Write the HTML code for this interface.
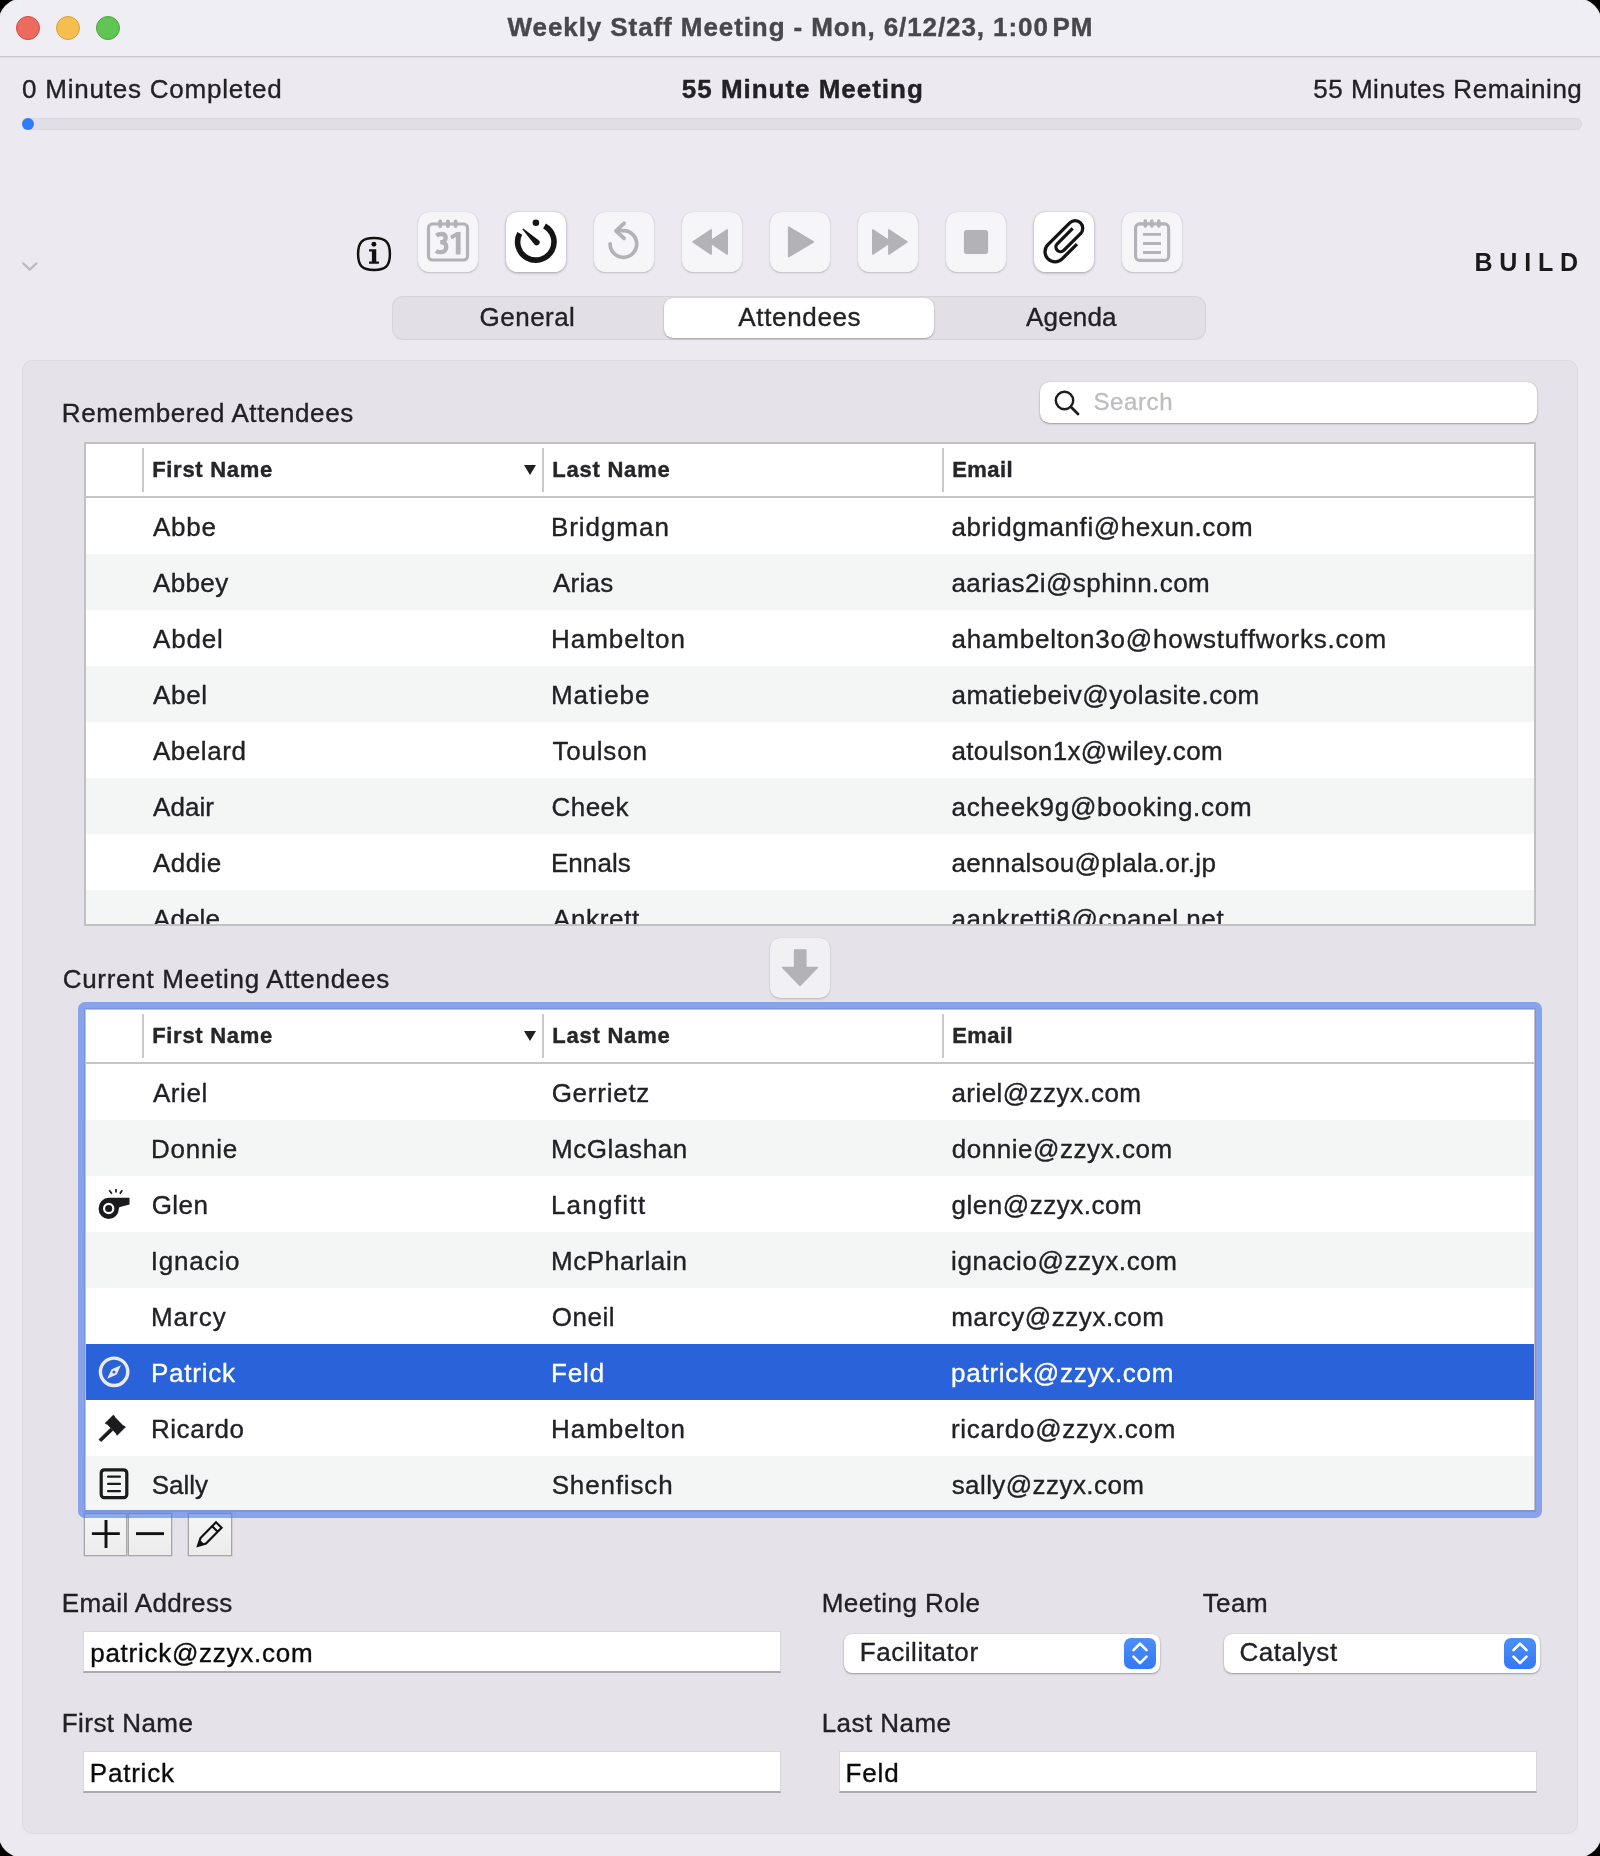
<!DOCTYPE html>
<html><head><meta charset="utf-8"><title>Weekly Staff Meeting</title>
<style>
*{box-sizing:border-box;margin:0;padding:0}
html,body{width:1600px;height:1856px;background:#000;overflow:hidden}
body{font-family:"Liberation Sans",sans-serif;color:#1d1d1f;position:relative}
.abs{position:absolute}
#win{will-change:transform;position:absolute;left:0;top:0;width:1600px;height:1856px;border-radius:22px;background:#ECEAF0;overflow:hidden;box-shadow:0 0 0 1.500px rgba(255,255,255,.9),inset 0 2px 0 rgba(255,255,255,.75)}
#tbar{position:absolute;left:0;top:0;width:1600px;height:57px;background:#F0EEF5;border-bottom:1px solid #CBC9CF}
#tbar:after{content:"";position:absolute;left:0;top:57px;width:1600px;height:1px;background:#DEDCE2}
.tl{position:absolute;top:16px;width:24px;height:24px;border-radius:50%}
#title{position:absolute;left:0;width:1600px;top:11px;text-align:center;font-weight:bold;font-size:26px;color:#47464b;line-height:32px;letter-spacing:.2px}
.tx{position:absolute;line-height:32px;white-space:nowrap;color:#222126}
.t26{position:absolute;font-size:26px;line-height:32px;white-space:nowrap;color:#222126}
#prog{position:absolute;left:22px;top:118px;width:1560px;height:12px;border-radius:6px;background:#E1DFE5;box-shadow:inset 0 0 1px rgba(0,0,0,.12)}
#dot{position:absolute;left:22px;top:118px;width:12px;height:12px;border-radius:50%;background:#2f7bf6}
.btn{position:absolute;top:212px;width:60px;height:60px;border-radius:11.500px;background:#F6F5F8;box-shadow:0 1px 2px rgba(0,0,0,.18),0 0 1px rgba(0,0,0,.15)}
.btn.on{background:#fff;box-shadow:0 1px 3px rgba(0,0,0,.3),0 0 1px rgba(0,0,0,.2)}
.btn svg{position:absolute;left:0;top:0}
#seg{position:absolute;left:392px;top:296px;width:814px;height:44px;border-radius:11px;background:#E2E0E6;box-shadow:inset 0 0 0 1px rgba(0,0,0,.05)}
#segsel{position:absolute;left:664px;top:298px;width:270px;height:40px;border-radius:9px;background:#fff;box-shadow:0 1px 2px rgba(0,0,0,.25),0 0 1px rgba(0,0,0,.2)}
.segt{position:absolute;top:301px;width:270px;text-align:center;font-size:26px;line-height:32px;color:#222126}
#panel{position:absolute;left:22px;top:360px;width:1556px;height:1474px;border-radius:10px;background:#E5E3E9;border:1px solid #DDDBE1}
.tbl{position:absolute;background:#fff;border:2px solid #C1C1C3;overflow:hidden}
.tbl .in{position:absolute;left:0;top:0;width:1448px;height:100%}
.th{position:absolute;left:0;top:0;width:1448px;height:54px;border-bottom:2px solid #C6C6C8;background:#fff;font-weight:bold;font-size:22px;color:#262528}
.th span{position:absolute;top:13px;line-height:26px;white-space:nowrap}
.h1{left:67px}.h2{left:467px}.h3{left:867px}
.vs{position:absolute;top:4px;width:2px;height:44px;background:#C9C9CB}
.sort{position:absolute;left:437px;top:20px}
.row{position:absolute;left:0;width:1448px;height:56px;font-size:26px;line-height:56px;color:#222126;background:#fff;white-space:nowrap}
.row.alt{background:#F4F5F5}
.row.sel{background:#2962D9;color:#fff}
.c1{left:67px}.c2{left:467px}.c3{left:867px}
.ric{position:absolute;left:0;top:0}
#ring{position:absolute;left:78px;top:1002px;width:1464px;height:516px;border-radius:7px;border:7px solid rgba(74,120,235,.6);border-bottom-width:8px;z-index:5}
.inp{position:absolute;height:42px;background:#fff;border:1px solid #D8D7DB;border-bottom:2px solid #ABAAAE}
.pop{position:absolute;height:39px;border-radius:8px;background:#fff;box-shadow:0 1px 2px rgba(0,0,0,.3),0 0 1px rgba(0,0,0,.25);font-size:26px;line-height:36px;padding-left:16px;color:#222126}
.pop .chev{position:absolute;right:4px;top:4px;width:32px;height:31px;border-radius:7px;background:linear-gradient(#4B90F8,#3377F5)}
.sq{position:absolute;top:1513px;width:43px;height:43px;background:linear-gradient(#F6F6F6,#ECECED);border:1px solid #A6A5A9;box-shadow:0 0 0 .5px #BDBCC0}
.sq svg{position:absolute;left:-1px;top:-1px}
#search{position:absolute;left:1040px;top:381.500px;width:496.500px;height:41px;border-radius:9.500px;background:#fff;box-shadow:0 1px 2px rgba(0,0,0,.3),0 0 1px rgba(0,0,0,.25)}
</style></head><body>
<div id="win">
<div id="tbar">
 <div class="tl" style="left:16px;background:#ED6A5E;border:1px solid #D5473B"></div>
 <div class="tl" style="left:56px;background:#F5BF4F;border:1px solid #D9A133"></div>
 <div class="tl" style="left:96px;background:#61C554;border:1px solid #45A63A"></div>
 <div class="tx" style="left:507.62px;top:10.99px;font-size:26px;letter-spacing:0.912px;font-weight:bold;-webkit-text-stroke:0.400px #48474c;color:#48474c;">Weekly Staff Meeting - Mon, 6/12/23, 1:00<span style="letter-spacing:-3.5px"> </span>PM</div>
</div>
<div class="tx" style="left:22.05px;top:72.99px;font-size:26px;letter-spacing:0.771px;-webkit-text-stroke:0.350px #222126;">0 Minutes Completed</div>
<div class="tx" style="left:681.87px;top:72.89px;font-size:26px;letter-spacing:0.974px;font-weight:bold;-webkit-text-stroke:0.400px #222126;">55 Minute Meeting</div>
<div class="tx" style="left:1313.24px;top:72.99px;font-size:26px;letter-spacing:0.521px;-webkit-text-stroke:0.350px #222126;">55 Minutes Remaining</div>
<div id="prog"></div><div id="dot"></div>

<!-- disclosure chevron -->
<svg class="abs" style="left:18px;top:256px" width="24" height="20" viewBox="0 0 24 20"><path d="M5.200 7.400l6.600 6.200 6.600-6.200" fill="none" stroke="#BCBBC0" stroke-width="2.300" stroke-linecap="round" stroke-linejoin="round"/></svg>

<!-- info -->
<svg class="abs" style="left:344px;top:224px" width="60" height="60" viewBox="0 0 60 60"><path d="M30 14.100C41.800 14.100 45.900 18.200 45.900 30C45.900 41.800 41.800 45.900 30 45.900C18.200 45.900 14.100 41.800 14.100 30C14.100 18.200 18.200 14.100 30 14.100Z" fill="none" stroke="#111" stroke-width="2.500"/><circle cx="29.900" cy="20.250" r="2.450" fill="#111"/><path d="M25.100 25.300H32.250V37.500H34.950V39.750H25.050V37.500H27.900V27.550H25.100Z" fill="#111"/></svg>

<div class="btn" style="left:418px"><svg width="60" height="60" viewBox="0 0 60 60"><rect x="10.500" y="12" width="39" height="36" rx="3.800" fill="none" stroke="#B3B2B6" stroke-width="3.200"/><g stroke="#B3B2B6" stroke-width="4" stroke-linecap="round"><path d="M22.200 9.400v4.500M29.900 9.400v4.500M37.600 9.400v4.500"/></g><path d="M18.400 23.700C19.900 22.500 21.500 22 23.200 22C26 22 27.700 23.400 27.700 25.700C27.700 28.300 25.700 30.100 22.300 30.200C26.200 30.300 28.300 32.200 28.300 35C28.300 38.200 25.900 40.200 22.600 40.200C20.800 40.200 19.200 39.800 17.900 38.900" fill="none" stroke="#B3B2B6" stroke-width="4.300"/><path d="M37.800 42.400V25L33.500 27.400L32.300 23.800L38.700 19.900H42.600V42.400Z" fill="#B3B2B6"/></svg></div>
<div class="btn on" style="left:506px"><svg width="60" height="60" viewBox="0 0 60 60"><path d="M38.510 13.920A18.200 18.200 0 1 1 13.730 21.360" fill="none" stroke="#141414" stroke-width="5.600"/><circle cx="29.900" cy="10.800" r="3.300" fill="#141414"/><path d="M16.380 17.330L28.500 32.550A3 3 0 0 0 32.700 28.250L17.220 16.470Z" fill="#141414"/></svg></div>
<div class="btn" style="left:594px"><svg width="60" height="60" viewBox="0 0 60 60"><g fill="none" stroke="#B3B2B6" stroke-width="3.700" stroke-linecap="round" stroke-linejoin="round"><path d="M16.100 31.800A13.300 13.300 0 1 0 29.400 18.700H23"/><path d="M30.100 11.300L21.900 18.800L30.100 26.400"/></g></svg></div>
<div class="btn" style="left:682px"><svg width="60" height="60" viewBox="0 0 60 60"><g fill="#B3B2B6" stroke="#B3B2B6" stroke-width="1.600" stroke-linejoin="round"><path d="M29.100 17.800V42.100L11.030 29.950Z"/><path d="M45.200 17.800V42.100L27.130 29.950Z"/></g></svg></div>
<div class="btn" style="left:770px"><svg width="60" height="60" viewBox="0 0 60 60"><path d="M18.700 15.160V44.640L43.440 29.900Z" fill="#B3B2B6" stroke="#B3B2B6" stroke-width="1.600" stroke-linejoin="round"/></svg></div>
<div class="btn" style="left:858px"><svg width="60" height="60" viewBox="0 0 60 60"><g fill="#B3B2B6" stroke="#B3B2B6" stroke-width="1.600" stroke-linejoin="round"><path d="M30.900 17.800V42.100L48.970 29.950Z"/><path d="M14.800 17.800V42.100L32.870 29.950Z"/></g></svg></div>
<div class="btn" style="left:946px"><svg width="60" height="60" viewBox="0 0 60 60"><rect x="17.900" y="17.900" width="24.200" height="24.200" rx="2.800" fill="#B3B2B6"/></svg></div>
<div class="btn on" style="left:1034px"><svg width="60" height="60" viewBox="0 0 60 60"><path d="M42.960 32.070L28.160 46.880A10.050 10.050 0 0 1 13.940 32.670L35.780 10.830A7.600 7.600 0 0 1 46.530 21.580L29.770 38.340A4.600 4.600 0 0 1 23.260 31.830L38.650 16.450" fill="none" stroke="#141414" stroke-width="3.300"/></svg></div>
<div class="btn" style="left:1122px"><svg width="60" height="60" viewBox="0 0 60 60"><rect x="13.550" y="11.850" width="33.100" height="36.500" rx="4.200" fill="none" stroke="#B3B2B6" stroke-width="3.100"/><g stroke="#B3B2B6" stroke-width="3.600" stroke-linecap="round"><path d="M23.300 9v5M29.900 9v5M36.800 9v5"/></g><path d="M21 22.400H39M21 31.500H39M21 40.500H39" stroke="#B3B2B6" stroke-width="2.900"/></svg></div>

<div class="abs" style="left:1474.500px;top:245.500px;font-weight:bold;font-size:25px;line-height:32px;letter-spacing:6.800px;color:#1a1a1c;white-space:nowrap">BUILD</div>

<div id="seg"></div><div id="segsel"></div>
<div class="tx" style="left:479.60px;top:300.99px;font-size:26px;letter-spacing:0.465px;-webkit-text-stroke:0.350px #222126;">General</div>
<div class="tx" style="left:738.31px;top:300.99px;font-size:26px;letter-spacing:0.654px;-webkit-text-stroke:0.350px #222126;">Attendees</div>
<div class="tx" style="left:1025.98px;top:300.99px;font-size:26px;letter-spacing:0.194px;-webkit-text-stroke:0.350px #222126;">Agenda</div>

<div id="panel"></div>
<div class="tx" style="left:61.79px;top:396.99px;font-size:26px;letter-spacing:0.579px;-webkit-text-stroke:0.350px #222126;">Remembered Attendees</div>
<div id="search">
 <svg class="abs" style="left:12px;top:6px" width="30" height="30" viewBox="0 0 30 30"><circle cx="12.500" cy="12.500" r="8.700" fill="none" stroke="#1d1d1f" stroke-width="2.400"/><path d="M19 19l7 7" stroke="#1d1d1f" stroke-width="2.800" stroke-linecap="round"/></svg>
 
</div>

<div class="tx" style="left:1093.46px;top:385.68px;font-size:24px;letter-spacing:0.601px;-webkit-text-stroke:0.350px #BEBDC2;color:#BEBDC2;">Search</div>
<div class="tbl" style="left:84px;top:442px;width:1452px;height:484px"><div class="in">
<div class="th"><div class="vs" style="left:56px"></div><div class="vs" style="left:456px"></div><div class="vs" style="left:856px"></div><div class="tx" style="left:66.19px;top:10.38px;font-size:22px;letter-spacing:0.693px;font-weight:bold;-webkit-text-stroke:0.400px #262528;color:#262528;">First Name</div><div class="tx" style="left:466.19px;top:10.38px;font-size:22px;letter-spacing:0.783px;font-weight:bold;-webkit-text-stroke:0.400px #262528;color:#262528;">Last Name</div><div class="tx" style="left:866.19px;top:10.38px;font-size:22px;letter-spacing:0.456px;font-weight:bold;-webkit-text-stroke:0.400px #262528;color:#262528;">Email</div><svg class="sort" width="14" height="12" viewBox="0 0 14 12"><path d="M1 1h12L7 11z" fill="#222"/></svg></div>
<div class="row" style="top:54px"><div class="tx" style="left:66.98px;top:12.99px;font-size:26px;letter-spacing:0.748px;-webkit-text-stroke:0.350px #222126;">Abbe</div><div class="tx" style="left:464.88px;top:12.99px;font-size:26px;letter-spacing:0.959px;-webkit-text-stroke:0.350px #222126;">Bridgman</div><div class="tx" style="left:865.46px;top:12.99px;font-size:26px;letter-spacing:0.585px;-webkit-text-stroke:0.350px #222126;">abridgmanfi@hexun.com</div></div>
<div class="row alt" style="top:110px"><div class="tx" style="left:66.98px;top:12.99px;font-size:26px;letter-spacing:0.381px;-webkit-text-stroke:0.350px #222126;">Abbey</div><div class="tx" style="left:466.98px;top:12.99px;font-size:26px;letter-spacing:0.247px;-webkit-text-stroke:0.350px #222126;">Arias</div><div class="tx" style="left:865.46px;top:12.99px;font-size:26px;letter-spacing:0.438px;-webkit-text-stroke:0.350px #222126;">aarias2i@sphinn.com</div></div>
<div class="row" style="top:166px"><div class="tx" style="left:66.98px;top:12.99px;font-size:26px;letter-spacing:0.820px;-webkit-text-stroke:0.350px #222126;">Abdel</div><div class="tx" style="left:464.88px;top:12.99px;font-size:26px;letter-spacing:1.033px;-webkit-text-stroke:0.350px #222126;">Hambelton</div><div class="tx" style="left:865.46px;top:12.99px;font-size:26px;letter-spacing:0.794px;-webkit-text-stroke:0.350px #222126;">ahambelton3o@howstuffworks.com</div></div>
<div class="row alt" style="top:222px"><div class="tx" style="left:66.98px;top:12.99px;font-size:26px;letter-spacing:0.690px;-webkit-text-stroke:0.350px #222126;">Abel</div><div class="tx" style="left:464.88px;top:12.99px;font-size:26px;letter-spacing:1.034px;-webkit-text-stroke:0.350px #222126;">Matiebe</div><div class="tx" style="left:865.46px;top:12.99px;font-size:26px;letter-spacing:0.509px;-webkit-text-stroke:0.350px #222126;">amatiebeiv@yolasite.com</div></div>
<div class="row" style="top:278px"><div class="tx" style="left:66.98px;top:12.99px;font-size:26px;letter-spacing:0.547px;-webkit-text-stroke:0.350px #222126;">Abelard</div><div class="tx" style="left:466.41px;top:12.99px;font-size:26px;letter-spacing:0.818px;-webkit-text-stroke:0.350px #222126;">Toulson</div><div class="tx" style="left:865.46px;top:12.99px;font-size:26px;letter-spacing:0.363px;-webkit-text-stroke:0.350px #222126;">atoulson1x@wiley.com</div></div>
<div class="row alt" style="top:334px"><div class="tx" style="left:66.98px;top:12.99px;font-size:26px;letter-spacing:0.069px;-webkit-text-stroke:0.350px #222126;">Adair</div><div class="tx" style="left:465.59px;top:12.99px;font-size:26px;letter-spacing:0.419px;-webkit-text-stroke:0.350px #222126;">Cheek</div><div class="tx" style="left:865.46px;top:12.99px;font-size:26px;letter-spacing:0.712px;-webkit-text-stroke:0.350px #222126;">acheek9g@booking.com</div></div>
<div class="row" style="top:390px"><div class="tx" style="left:66.98px;top:12.99px;font-size:26px;letter-spacing:0.456px;-webkit-text-stroke:0.350px #222126;">Addie</div><div class="tx" style="left:464.88px;top:12.99px;font-size:26px;letter-spacing:0.084px;-webkit-text-stroke:0.350px #222126;">Ennals</div><div class="tx" style="left:865.46px;top:12.99px;font-size:26px;letter-spacing:0.338px;-webkit-text-stroke:0.350px #222126;">aennalsou@plala.or.jp</div></div>
<div class="row alt" style="top:446px"><div class="tx" style="left:67.00px;top:12.99px;font-size:26px;letter-spacing:0.115px;-webkit-text-stroke:0.350px #222126;">Adele</div><div class="tx" style="left:467.00px;top:12.99px;font-size:26px;letter-spacing:0.643px;-webkit-text-stroke:0.350px #222126;">Ankrett</div><div class="tx" style="left:865.50px;top:12.99px;font-size:26px;letter-spacing:0.578px;-webkit-text-stroke:0.350px #222126;">aankretti8@cpanel.net</div></div>
</div></div>

<!-- down arrow button -->
<div class="btn" style="left:770px;top:938px;background:#F1F0F3;border-radius:10px"><svg width="60" height="60" viewBox="0 0 60 60"><path d="M24.650 12.050H35.800V29.450H47.350L30 47.350L12.650 29.450H24.650Z" fill="#B3B2B6" stroke="#B3B2B6" stroke-width="1.600" stroke-linejoin="round"/></svg></div>

<div class="tx" style="left:62.66px;top:962.79px;font-size:26px;letter-spacing:0.719px;-webkit-text-stroke:0.350px #222126;">Current Meeting Attendees</div>
<div id="ring"></div>
<div class="tbl" style="left:84px;top:1008px;width:1452px;height:504px;border-color:#C2C2C4"><div class="in">
<div class="th"><div class="vs" style="left:56px"></div><div class="vs" style="left:456px"></div><div class="vs" style="left:856px"></div><div class="tx" style="left:66.19px;top:10.38px;font-size:22px;letter-spacing:0.693px;font-weight:bold;-webkit-text-stroke:0.400px #262528;color:#262528;">First Name</div><div class="tx" style="left:466.19px;top:10.38px;font-size:22px;letter-spacing:0.783px;font-weight:bold;-webkit-text-stroke:0.400px #262528;color:#262528;">Last Name</div><div class="tx" style="left:866.19px;top:10.38px;font-size:22px;letter-spacing:0.456px;font-weight:bold;-webkit-text-stroke:0.400px #262528;color:#262528;">Email</div><svg class="sort" width="14" height="12" viewBox="0 0 14 12"><path d="M1 1h12L7 11z" fill="#222"/></svg></div>
<div class="row" style="top:54px"><div class="tx" style="left:66.98px;top:12.99px;font-size:26px;letter-spacing:0.564px;-webkit-text-stroke:0.350px #222126;">Ariel</div><div class="tx" style="left:465.65px;top:12.99px;font-size:26px;letter-spacing:0.750px;-webkit-text-stroke:0.350px #222126;">Gerrietz</div><div class="tx" style="left:865.46px;top:12.99px;font-size:26px;letter-spacing:0.438px;-webkit-text-stroke:0.350px #222126;">ariel@zzyx.com</div></div>
<div class="row alt" style="top:110px"><div class="tx" style="left:64.88px;top:12.99px;font-size:26px;letter-spacing:0.780px;-webkit-text-stroke:0.350px #222126;">Donnie</div><div class="tx" style="left:464.88px;top:12.99px;font-size:26px;letter-spacing:0.616px;-webkit-text-stroke:0.350px #222126;">McGlashan</div><div class="tx" style="left:865.68px;top:12.99px;font-size:26px;letter-spacing:0.553px;-webkit-text-stroke:0.350px #222126;">donnie@zzyx.com</div></div>
<div class="row" style="top:166px"><svg class="ric" width="60" height="56" viewBox="0 0 60 56"><path d="M22.700 21.800H43.500V28.500L34 31.100C33.200 31.400 32.850 31.900 32.850 32.450A10.150 10.650 0 1 1 22.700 21.800Z" fill="#1b1b1d"/><circle cx="22.700" cy="32.550" r="4.630" fill="none" stroke="#fff" stroke-width="2.140"/><g stroke="#1b1b1d" stroke-width="1.700" stroke-linecap="butt"><path d="M23.250 14.250L25.900 17.800M30 12.900V16.500M36.200 14.250L33.900 17.800"/></g></svg><div class="tx" style="left:65.65px;top:12.99px;font-size:26px;letter-spacing:0.458px;-webkit-text-stroke:0.350px #222126;">Glen</div><div class="tx" style="left:464.88px;top:12.99px;font-size:26px;letter-spacing:1.284px;-webkit-text-stroke:0.350px #222126;">Langfitt</div><div class="tx" style="left:865.60px;top:12.99px;font-size:26px;letter-spacing:0.511px;-webkit-text-stroke:0.350px #222126;">glen@zzyx.com</div></div>
<div class="row alt" style="top:222px"><div class="tx" style="left:64.74px;top:12.99px;font-size:26px;letter-spacing:0.819px;-webkit-text-stroke:0.350px #222126;">Ignacio</div><div class="tx" style="left:464.88px;top:12.99px;font-size:26px;letter-spacing:0.663px;-webkit-text-stroke:0.350px #222126;">McPharlain</div><div class="tx" style="left:865.02px;top:12.99px;font-size:26px;letter-spacing:0.587px;-webkit-text-stroke:0.350px #222126;">ignacio@zzyx.com</div></div>
<div class="row" style="top:278px"><div class="tx" style="left:64.88px;top:12.99px;font-size:26px;letter-spacing:1.047px;-webkit-text-stroke:0.350px #222126;">Marcy</div><div class="tx" style="left:465.84px;top:12.99px;font-size:26px;letter-spacing:0.518px;-webkit-text-stroke:0.350px #222126;">Oneil</div><div class="tx" style="left:865.13px;top:12.99px;font-size:26px;letter-spacing:0.566px;-webkit-text-stroke:0.350px #222126;">marcy@zzyx.com</div></div>
<div class="row alt sel" style="top:334px"><svg class="ric" width="60" height="56" viewBox="0 0 60 56"><circle cx="28.100" cy="27.850" r="13.700" fill="none" stroke="#ebebeb" stroke-width="3.400"/><path d="M34.900 21.200L30.750 30.400L21.200 34.700L25.600 25.200Z" fill="#ebebeb" fill-rule="evenodd"/><circle cx="27.950" cy="27.950" r="1.500" fill="#2962D9"/></svg><div class="tx" style="left:64.96px;top:12.99px;font-size:26px;letter-spacing:0.770px;-webkit-text-stroke:0.350px #fff;color:#fff;">Patrick</div><div class="tx" style="left:465.10px;top:12.99px;font-size:26px;letter-spacing:0.809px;-webkit-text-stroke:0.350px #fff;color:#fff;">Feld</div><div class="tx" style="left:865.12px;top:12.99px;font-size:26px;letter-spacing:0.734px;-webkit-text-stroke:0.350px #fff;color:#fff;">patrick@zzyx.com</div></div>
<div class="row" style="top:390px"><svg class="ric" width="60" height="56" viewBox="0 0 60 56"><g fill="#1b1b1d" stroke="#1b1b1d" stroke-width=".8" stroke-linejoin="round"><path d="M19.200 23.250L27.500 15.100L29.100 17.600L36.900 25.600L39.450 26.900L31.100 35.300L30 33.300L21.700 24.600Z"/><path d="M13 39.500L15.100 41.600L26.800 30.500L24.500 28.200Z"/></g></svg><div class="tx" style="left:64.88px;top:12.99px;font-size:26px;letter-spacing:0.566px;-webkit-text-stroke:0.350px #222126;">Ricardo</div><div class="tx" style="left:464.88px;top:12.99px;font-size:26px;letter-spacing:1.033px;-webkit-text-stroke:0.350px #222126;">Hambelton</div><div class="tx" style="left:864.92px;top:12.99px;font-size:26px;letter-spacing:0.682px;-webkit-text-stroke:0.350px #222126;">ricardo@zzyx.com</div></div>
<div class="row alt" style="top:446px"><svg class="ric" width="60" height="56" viewBox="0 0 60 56"><rect x="15.200" y="13.800" width="25.600" height="27.900" rx="3.200" fill="none" stroke="#1b1b1d" stroke-width="3.200"/><path d="M22.100 20.700H33.950M22.100 27.900H33.950M22.100 35.200H33.950" stroke="#1b1b1d" stroke-width="2.250" stroke-linecap="round"/></svg><div class="tx" style="left:65.63px;top:12.99px;font-size:26px;letter-spacing:-0.005px;-webkit-text-stroke:0.350px #222126;">Sally</div><div class="tx" style="left:465.63px;top:12.99px;font-size:26px;letter-spacing:0.858px;-webkit-text-stroke:0.350px #222126;">Shenfisch</div><div class="tx" style="left:865.66px;top:12.99px;font-size:26px;letter-spacing:0.426px;-webkit-text-stroke:0.350px #222126;">sally@zzyx.com</div></div>
</div></div>

<div class="sq" style="left:84px"><svg width="43" height="43" viewBox="0 0 43 43"><path d="M7.900 20.650h27.900M22 7.100v27.900" stroke="#111" stroke-width="2.900"/></svg></div>
<div class="sq" style="left:128px;width:44px"><svg width="44" height="43" viewBox="0 0 44 43"><path d="M8 20.650h28" stroke="#111" stroke-width="2.900"/></svg></div>
<div class="sq" style="left:188px;width:44px"><svg width="44" height="43" viewBox="0 0 44 43"><g transform="translate(1.1 1.1) scale(.95)"><g fill="none" stroke="#111" stroke-width="2.300" stroke-linejoin="miter"><path d="M9.300 33.500l2.700-8.300L28.300 8.600l5.900 5.800L17.800 31z"/><path d="M24.300 12.700l5.800 5.800"/></g><path d="M9.300 33.500l2.100-6.400 4.300 4.400z" fill="#111"/></g></svg></div>

<div class="tx" style="left:61.79px;top:1586.69px;font-size:26px;letter-spacing:0.359px;-webkit-text-stroke:0.350px #222126;">Email Address</div>
<div class="tx" style="left:821.70px;top:1586.69px;font-size:26px;letter-spacing:0.451px;-webkit-text-stroke:0.350px #222126;">Meeting Role</div>
<div class="tx" style="left:1202.64px;top:1586.69px;font-size:26px;letter-spacing:0.483px;-webkit-text-stroke:0.350px #222126;">Team</div>
<div class="inp" style="left:83px;top:1631px;width:698px"></div><div class="tx" style="left:90.22px;top:1636.99px;font-size:26px;letter-spacing:0.734px;-webkit-text-stroke:0.350px #0a0a0a;color:#0a0a0a;">patrick@zzyx.com</div>
<div class="pop" style="left:844px;top:1633.500px;width:316px"><div class="chev"><svg width="32" height="32" viewBox="0 0 32 32"><path d="M9.500 12.200l6.500-6.500 6.500 6.500M9.500 18.700l6.500 6.500 6.500-6.500" fill="none" stroke="#fff" stroke-width="2.600" stroke-linecap="round" stroke-linejoin="round"/></svg></div></div>
<div class="pop" style="left:1224px;top:1633.500px;width:316px"><div class="chev"><svg width="32" height="32" viewBox="0 0 32 32"><path d="M9.500 12.200l6.500-6.500 6.500 6.500M9.500 18.700l6.500 6.500 6.500-6.500" fill="none" stroke="#fff" stroke-width="2.600" stroke-linecap="round" stroke-linejoin="round"/></svg></div></div>

<div class="tx" style="left:859.70px;top:1635.69px;font-size:26px;letter-spacing:0.566px;-webkit-text-stroke:0.350px #222126;">Facilitator</div><div class="tx" style="left:1239.59px;top:1635.69px;font-size:26px;letter-spacing:0.515px;-webkit-text-stroke:0.350px #222126;">Catalyst</div>
<div class="tx" style="left:61.79px;top:1706.99px;font-size:26px;letter-spacing:0.444px;-webkit-text-stroke:0.350px #222126;">First Name</div>
<div class="tx" style="left:821.70px;top:1706.99px;font-size:26px;letter-spacing:0.441px;-webkit-text-stroke:0.350px #222126;">Last Name</div>
<div class="inp" style="left:83px;top:1751px;width:698px"></div><div class="tx" style="left:89.86px;top:1756.69px;font-size:26px;letter-spacing:0.770px;-webkit-text-stroke:0.350px #0a0a0a;color:#0a0a0a;">Patrick</div>
<div class="inp" style="left:839px;top:1751px;width:698px"></div><div class="tx" style="left:845.60px;top:1756.69px;font-size:26px;letter-spacing:0.809px;-webkit-text-stroke:0.350px #0a0a0a;color:#0a0a0a;">Feld</div>
</div>
</body></html>
